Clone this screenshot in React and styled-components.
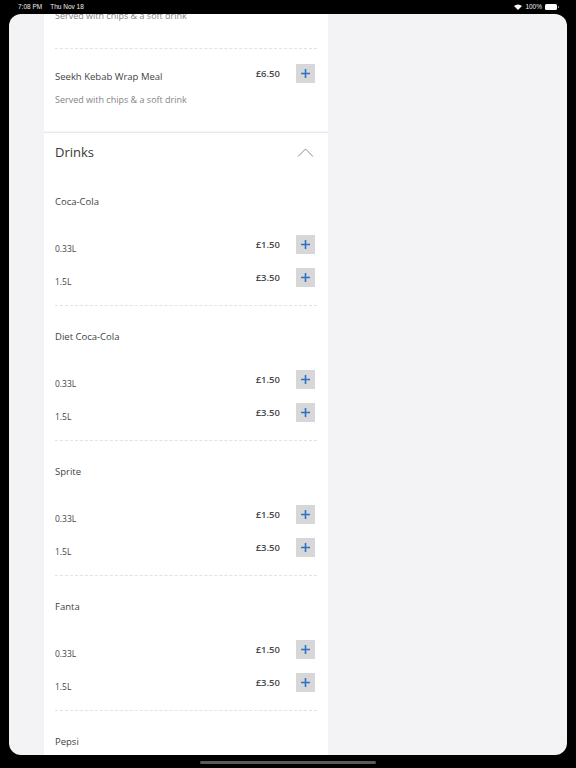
import React from "react";
import styled, { createGlobalStyle } from "styled-components";

const GlobalStyle = createGlobalStyle`
  html, body { margin: 0; padding: 0; background: #000; }
  body { font-family: "Open Sans", "Liberation Sans", sans-serif; }
  * { box-sizing: border-box; }
`;

const meals = [
  { name: "Chicken Wrap Meal", price: "£6.00", desc: "Served with chips & a soft drink" },
  { name: "Seekh Kebab Wrap Meal", price: "£6.50", desc: "Served with chips & a soft drink" },
];

const drinks = ["Coca-Cola", "Diet Coca-Cola", "Sprite", "Fanta", "Pepsi"];
const sizes = [
  { label: "0.33L", price: "£1.50" },
  { label: "1.5L", price: "£3.50" },
];

const Screen = styled.div`
  width: 576px;
  height: 768px;
  background: #000;
  display: flex;
  flex-direction: column;
  overflow: hidden;
`;

const StatusBar = styled.div`
  height: 14px;
  line-height: 14px;
  padding: 0 19px 0 18px;
  display: flex;
  align-items: center;
  justify-content: space-between;
  color: #eee;
  font-family: "Liberation Sans", sans-serif;
  font-size: 6.5px;
`;

const StatusGroup = styled.div`
  display: flex;
  align-items: center;
  gap: ${(p) => p.$gap || 8}px;
`;

const Battery = styled.div`
  position: relative;
  width: 12px;
  height: 6px;
  border-radius: 1.5px;
  background: #fff;
  &::after {
    content: "";
    position: absolute;
    right: -2px;
    top: 2px;
    width: 1px;
    height: 2px;
    background: #888;
  }
`;

const Sheet = styled.div`
  height: 741px;
  margin: 0 9px;
  border-radius: 12px;
  background: #f3f2f5;
  overflow: hidden;
`;

const MenuColumn = styled.div`
  margin-left: 35px;
  width: 284px;
  height: 100%;
  background: #fff;
  overflow: hidden;
`;

const List = styled.div`
  margin-top: -49px;
`;

const MealItem = styled.div`
  margin: 0 11px;
  padding: 15px 0 26px;
  border-bottom: ${(p) => (p.$last ? "none" : "1px dashed #e2e2e2")};
  display: flex;
  flex-direction: column;
  gap: 11px;
`;

const Row = styled.div`
  display: flex;
  align-items: center;
  height: 19px;
`;

const ItemName = styled.div`
  flex: 1;
  padding-top: 6px;
  font-size: 9.5px;
  color: #3f3f3f;
`;

const SizeLabel = styled.div`
  flex: 1;
  padding-top: 7px;
  font-size: 8.5px;
  color: #444;
`;

const Price = styled.div`
  font-size: 9.5px;
  font-weight: 600;
  color: #4a4a4a;
  margin-right: 16px;
`;

const AddButton = styled.button`
  width: 19px;
  height: 19px;
  margin-right: 2px;
  padding: 0;
  border: none;
  background: #d7d7d9;
  display: flex;
  align-items: center;
  justify-content: center;
  cursor: pointer;
`;

const Desc = styled.div`
  font-size: 9px;
  line-height: 12px;
  color: #858585;
`;

const Section = styled.div`
  border-top: 1px solid #e8e8e8;
  box-shadow: 0 -1px 1px rgba(0, 0, 0, 0.03);
`;

const SectionHeader = styled.div`
  height: 38px;
  padding: 0 14px 0 11px;
  display: flex;
  align-items: center;
  justify-content: space-between;
  font-size: 13px;
  color: #383838;
`;

const DrinkGroup = styled.div`
  margin: 0 11px;
  padding: 24px 0 18px;
  border-bottom: 1px dashed #e2e2e2;
`;

const DrinkName = styled.div`
  font-size: 9.5px;
  line-height: 14px;
  color: #3f3f3f;
  margin-bottom: 26px;
`;

const Sizes = styled.div`
  display: flex;
  flex-direction: column;
  gap: 14px;
`;

const HomeBar = styled.div`
  width: 176px;
  height: 3px;
  margin: 6px auto 0;
  border-radius: 2px;
  background: #5a5a5c;
`;

const Plus = () => (
  <svg width="11" height="11" viewBox="0 0 11 11">
    <path d="M5.5 1v9M1 5.5h9" stroke="#2f72c4" strokeWidth="1.6" />
  </svg>
);

const Chevron = () => (
  <svg width="17" height="9" viewBox="0 0 17 9">
    <path d="M1 8.5L8.5 1L16 8.5" fill="none" stroke="#8a8a8a" strokeWidth="1" />
  </svg>
);

const Wifi = () => (
  <svg width="8" height="6" viewBox="0 0 8 6">
    <path d="M4 6L0 2a6 6 0 0 1 8 0z" fill="#fff" />
  </svg>
);

export default function App() {
  return (
    <>
      <GlobalStyle />
      <Screen>
        <StatusBar>
          <StatusGroup $gap={8}>
            <span>7:08 PM</span>
            <span>Thu Nov 18</span>
          </StatusGroup>
          <StatusGroup $gap={3}>
            <Wifi />
            <span>100%</span>
            <Battery />
          </StatusGroup>
        </StatusBar>
        <Sheet>
          <MenuColumn>
            <List>
              {meals.map((m, i) => (
                <MealItem key={m.name} $last={i === meals.length - 1}>
                  <Row>
                    <ItemName>{m.name}</ItemName>
                    <Price>{m.price}</Price>
                    <AddButton aria-label="Add">
                      <Plus />
                    </AddButton>
                  </Row>
                  <Desc>{m.desc}</Desc>
                </MealItem>
              ))}
              <Section>
                <SectionHeader>
                  <span>Drinks</span>
                  <Chevron />
                </SectionHeader>
                {drinks.map((d) => (
                  <DrinkGroup key={d}>
                    <DrinkName>{d}</DrinkName>
                    <Sizes>
                      {sizes.map((s) => (
                        <Row key={s.label}>
                          <SizeLabel>{s.label}</SizeLabel>
                          <Price>{s.price}</Price>
                          <AddButton aria-label="Add">
                            <Plus />
                          </AddButton>
                        </Row>
                      ))}
                    </Sizes>
                  </DrinkGroup>
                ))}
              </Section>
            </List>
          </MenuColumn>
        </Sheet>
        <HomeBar />
      </Screen>
    </>
  );
}
